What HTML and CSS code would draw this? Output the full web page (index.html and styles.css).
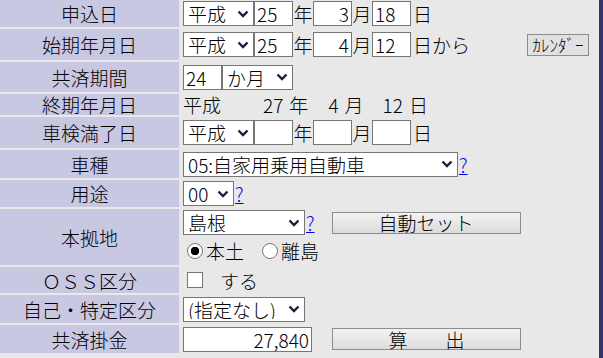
FILE: index.html
```html
<!DOCTYPE html>
<html lang="ja">
<head>
  <meta charset="UTF-8" />
  <title>共済掛金試算</title>
  <link rel="stylesheet" href="styles.css">
</head>
<body>
  <div class="page">
    <div class="form">
      <!-- 申込日 -->
      <div class="label">申込日</div>
      <div class="value">
        <select class="era"><option>平成</option></select><input class="num" value="25"><span class="unit">年</span><input class="num right" value="3"><span class="unit">月</span><input class="num" value="18"><span class="unit-end">日</span>
      </div>

      <!-- 始期年月日 -->
      <div class="label">始期年月日</div>
      <div class="value">
        <select class="era"><option>平成</option></select><input class="num" value="25"><span class="unit">年</span><input class="num right" value="4"><span class="unit">月</span><input class="num" value="12"><span class="unit-end">日から</span>
        <button class="calendar">ｶﾚﾝﾀﾞｰ</button>
      </div>

      <!-- 共済期間 -->
      <div class="label">共済期間</div>
      <div class="value">
        <input class="num" value="24"><select class="era"><option>か月</option></select>
      </div>

      <!-- 終期年月日 -->
      <div class="label">終期年月日</div>
      <div class="value end-date">
        <span>平成</span><span class="e-year">27</span><span class="e-u1">年</span><span class="e-month">4</span><span class="e-u2">月</span><span class="e-day">12</span><span class="e-u3">日</span>
      </div>

      <!-- 車検満了日 -->
      <div class="label">車検満了日</div>
      <div class="value">
        <select class="era"><option>平成</option></select><input class="num" value=""><span class="unit">年</span><input class="num right" value=""><span class="unit">月</span><input class="num" value=""><span class="unit-end">日</span>
      </div>

      <!-- 車種 -->
      <div class="label">車種</div>
      <div class="value">
        <select class="car-type"><option>05:自家用乗用自動車</option></select><a href="#" class="help">?</a>
      </div>

      <!-- 用途 -->
      <div class="label">用途</div>
      <div class="value">
        <select class="usage"><option>00</option></select><a href="#" class="help">?</a>
      </div>

      <!-- 本拠地 -->
      <div class="label">本拠地</div>
      <div class="value stacked">
        <div class="line">
          <select class="pref"><option>島根</option></select><a href="#" class="help">?</a>
          <button class="wide-btn">自動セット</button>
        </div>
        <div class="line radios">
          <label><input type="radio" name="area" checked>本土</label>
          <label><input type="radio" name="area">離島</label>
        </div>
      </div>

      <!-- OSS区分 -->
      <div class="label">ＯＳＳ区分</div>
      <div class="value">
        <label class="check"><input type="checkbox">する</label>
      </div>

      <!-- 自己・特定区分 -->
      <div class="label">自己・特定区分</div>
      <div class="value">
        <select class="pref"><option>(指定なし)</option></select>
      </div>

      <!-- 共済掛金 -->
      <div class="label">共済掛金</div>
      <div class="value">
        <input class="amount" value="27,840">
        <button class="wide-btn">算　　出</button>
      </div>
    </div>
  </div>
</body>
</html>
```

FILE: styles.css
```css
* {
  margin: 0;
  padding: 0;
  box-sizing: border-box;
}

body {
  background: #e8e8e8;
  font-family: "Noto Sans CJK JP", "Noto Sans", sans-serif;
  font-size: 19px;
  font-weight: 300;
  color: #000;
}

.page {
  width: 603px;
  height: 358px;
  background: #e8e8e8;
  border-right: 4px solid #34346b;
  overflow: hidden;
}

/* form table */
.form {
  display: grid;
  grid-template-columns: 179px 1fr;
  grid-template-rows: 27px 31px 30px 21px 31px 28px 27px 56px 26px 28px 28px;
  row-gap: 2px;
  column-gap: 4px;
}

.label {
  background: #c9c8e3;
  display: flex;
  align-items: center;
  justify-content: center;
  line-height: 1;
  white-space: nowrap;
}

.value {
  display: flex;
  align-items: center;
  line-height: 1;
  white-space: nowrap;
}

/* controls */
select,
input,
button {
  font-family: "Noto Sans CJK JP", "Noto Sans", sans-serif;
  font-size: 19px;
  font-weight: 300;
  color: #000;
}

select {
  -webkit-appearance: none;
  appearance: none;
  height: 25px;
  border: 1px solid #767676;
  border-radius: 0;
  background: #fff url("data:image/svg+xml,%3Csvg xmlns='http://www.w3.org/2000/svg' width='12' height='8' viewBox='0 0 12 8'%3E%3Cpath d='M1.5 1.5 L6 6 L10.5 1.5' fill='none' stroke='%231c1c3a' stroke-width='2.4'/%3E%3C/svg%3E") no-repeat right 4px center;
  padding: 0 18px 0 4px;
  line-height: 1;
}

input.num,
input.amount {
  height: 25px;
  border: 1px solid #767676;
  background: #fff;
  padding: 0 2px;
  line-height: 1;
}

.era { width: 71px; }
.num { width: 39px; }
.num.right { text-align: right; }

.unit {
  width: 20px;
  text-align: center;
}

.unit-end { margin-left: 2px; }

.calendar {
  margin-left: auto;
  margin-right: 10px;
  width: 62px;
  height: 22px;
  font-size: 17px;
  line-height: 1;
  padding: 0;
  white-space: nowrap;
  background: #e1e1e1;
  border: 1px solid #8c8c8c;
  border-radius: 0;
}

/* 終期年月日 */
.end-date .e-year { margin-left: 42px; }
.end-date .e-u1 { margin-left: 6px; }
.end-date .e-month { margin-left: 20px; }
.end-date .e-u2 { margin-left: 6px; }
.end-date .e-day { margin-left: 19px; }
.end-date .e-u3 { margin-left: 6px; }

.car-type { width: 275px; }
.usage { width: 51px; }
.pref { width: 122px; }

.help {
  color: #0000ee;
  text-decoration: underline;
  margin-left: 1px;
}

.stacked {
  flex-direction: column;
  align-items: flex-start;
  justify-content: flex-start;
  padding-top: 1px;
  gap: 6px;
}

.line {
  display: flex;
  align-items: center;
}

.wide-btn {
  margin-left: 17px;
  width: 189px;
  height: 22px;
  line-height: 1;
  background: linear-gradient(#f3f3f3, #dcdcdc);
  border: 1px solid #8c8c8c;
  border-radius: 0;
}

.radios label {
  display: flex;
  align-items: center;
  margin-right: 14px;
}

/* radio / checkbox drawn like the classic controls */
.radios input,
.check input {
  -webkit-appearance: none;
  appearance: none;
  width: 16px;
  height: 16px;
  margin: 0 3px 0 4px;
  background: #fff;
  border: 1px solid #767676;
}

.radios input {
  border-radius: 50%;
}

.radios input:checked {
  background: radial-gradient(circle, #000 0 4px, #fff 4.5px);
}

.check {
  display: flex;
  align-items: center;
}

.check input { margin-right: 17px; }

.amount {
  width: 129px;
  text-align: right;
}

.value .amount + .wide-btn { margin-left: 20px; }
```
